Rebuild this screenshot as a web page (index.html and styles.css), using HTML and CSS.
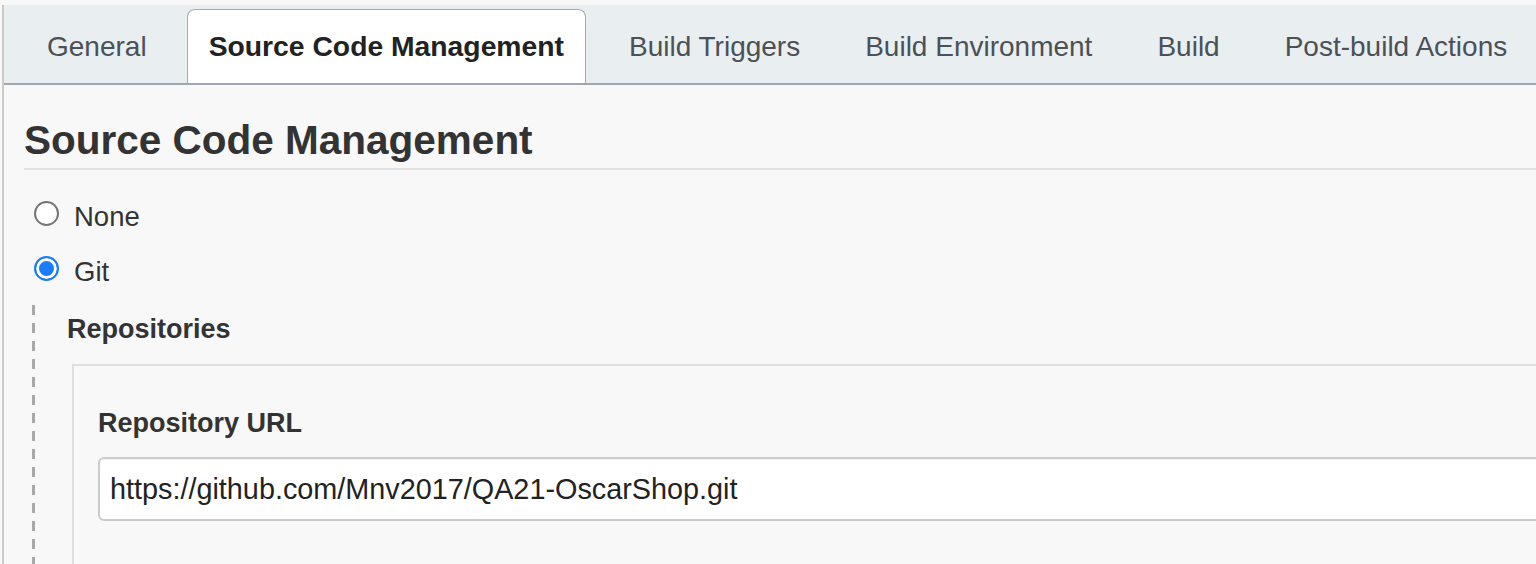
FILE: index.html
```html
<!DOCTYPE html>
<html lang="en">
<head>
<meta charset="utf-8">
<title>Source Code Management</title>
<link rel="stylesheet" href="styles.css">
</head>
<body>
<div class="page">
  <nav class="tabbar">
    <div class="tab tab-first">General</div>
    <div class="tab active">Source Code Management</div>
    <div class="tab">Build Triggers</div>
    <div class="tab">Build Environment</div>
    <div class="tab">Build</div>
    <div class="tab">Post-build Actions</div>
  </nav>
  <main class="content">
    <h2 class="section-title">Source Code Management</h2>
    <div class="radio-list">
      <label class="radio-row"><span class="radio"></span><span class="radio-text">None</span></label>
      <label class="radio-row"><span class="radio checked"></span><span class="radio-text">Git</span></label>
    </div>
    <div class="nested">
      <div class="field-label">Repositories</div>
      <div class="repo-box">
        <div class="field-label">Repository URL</div>
        <input class="text-input" type="text" value="https://github.com/Mnv2017/QA21-OscarShop.git">
      </div>
    </div>
  </main>
</div>
</body>
</html>
```

FILE: styles.css
```css
html, body {
  margin: 0;
  padding: 0;
  background: #f8f8f8;
  overflow: hidden;
  height: 564px;
}

body {
  font-family: "Liberation Sans", Helvetica, Arial, sans-serif;
  color: #333;
}

.page {
  margin-top: 5px;
  margin-left: 2px;
  border-left: 2px solid #cbcbcb;
  height: 559px;
}

.tabbar {
  margin-top: 1px;
  height: 78px;
  background: #e9eef1;
  border-bottom: 2px solid #9ea7b0;
  display: flex;
  align-items: flex-end;
  padding-left: 21px;
  gap: 21px;
  white-space: nowrap;
}

.tab {
  height: 73px;
  padding: 0 21px;
  display: flex;
  align-items: center;
  font-size: 28px;
  color: #4b5157;
  border: 1px solid transparent;
  border-bottom: none;
  border-radius: 8px 8px 0 0;
}

.tab-first {
  margin-right: -3px;
}

.tab.active {
  background: #fff;
  border-color: #a2abb4;
  color: #222;
  font-weight: bold;
  font-size: 28.3px;
}

.content {
  padding-left: 20px;
}

.section-title {
  margin: 31px 0 0 0;
  font-size: 40.5px;
  line-height: 48px;
  font-weight: bold;
  color: #333;
  padding-bottom: 4px;
  border-bottom: 2px solid #e2e2e2;
}

.radio-list {
  padding-top: 27px;
  display: flex;
  flex-direction: column;
  gap: 15px;
}

.radio-row {
  height: 40px;
  display: flex;
  align-items: center;
  font-size: 27.5px;
  color: #333;
}

.radio {
  box-sizing: border-box;
  width: 25px;
  height: 25px;
  margin-left: 10px;
  margin-right: 15px;
  margin-top: -7px;
  border-radius: 50%;
  border: 2px solid #767676;
  background: #fff;
}

.radio.checked {
  border: 2.5px solid #1a7cf8;
  background: #1a7cf8;
  box-shadow: inset 0 0 0 3px #fff;
}

.nested {
  margin-top: 13px;
  margin-left: 8px;
  padding-top: 8px;
  padding-left: 35px;
  height: 300px;
  background-image: repeating-linear-gradient(to bottom, #a9a9a9 0 10px, transparent 10px 18px);
  background-size: 3px 100%;
  background-repeat: no-repeat;
  background-position: left top;
}

.field-label {
  font-size: 27px;
  line-height: 32px;
  font-weight: bold;
  color: #333;
}

.repo-box {
  margin-top: 19px;
  margin-left: 5px;
  margin-right: -200px;
  padding: 41px 0 0 24px;
  border-top: 2px solid #dedede;
  border-left: 2px solid #dedede;
  height: 300px;
}

.text-input {
  display: block;
  box-sizing: border-box;
  margin-top: 18px;
  width: 100%;
  height: 64px;
  padding: 0 10px;
  border: 2px solid #cbcbcb;
  border-radius: 6px;
  background: #fff;
  box-shadow: inset 0 1px 2px rgba(0, 0, 0, 0.06);
  font-family: "Liberation Sans", Helvetica, Arial, sans-serif;
  font-size: 28.8px;
  color: #222;
  outline: none;
}
```
